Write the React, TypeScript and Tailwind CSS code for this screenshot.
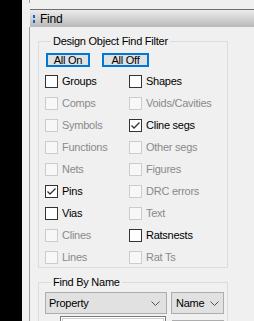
import React from "react";

type Item = { label: string; enabled: boolean; checked?: boolean };

const col1: Item[] = [
  { label: "Groups", enabled: true },
  { label: "Comps", enabled: false },
  { label: "Symbols", enabled: false },
  { label: "Functions", enabled: false },
  { label: "Nets", enabled: false },
  { label: "Pins", enabled: true, checked: true },
  { label: "Vias", enabled: true },
  { label: "Clines", enabled: false },
  { label: "Lines", enabled: false },
];
const col2: Item[] = [
  { label: "Shapes", enabled: true },
  { label: "Voids/Cavities", enabled: false },
  { label: "Cline segs", enabled: true, checked: true },
  { label: "Other segs", enabled: false },
  { label: "Figures", enabled: false },
  { label: "DRC errors", enabled: false },
  { label: "Text", enabled: false },
  { label: "Ratsnests", enabled: true },
  { label: "Rat Ts", enabled: false },
];

function Check({ item }: { item: Item }) {
  return (
    <div className="flex h-[13px] items-center">
      <div
        className={
          item.enabled
            ? "w-[13px] h-[13px] shrink-0 border border-[#333333] bg-white"
            : "w-[13px] h-[13px] shrink-0 border border-[#cccccc] bg-[#f7f7f7]"
        }
      >
        {item.checked && (
          <svg width="11" height="11" viewBox="0 0 11 11" className="block">
            <path d="M1.5 5.5 L4 8 L9.5 2.5" fill="none" stroke="#333333" strokeWidth="1.3" />
          </svg>
        )}
      </div>
      <span
        className={
          "ml-[4px] leading-[13px] whitespace-nowrap " +
          (item.enabled ? "text-black" : "text-[#8a8a8a]")
        }
      >
        {item.label}
      </span>
    </div>
  );
}

function Chevron() {
  return (
    <svg width="9" height="5" viewBox="0 0 9 5" className="block">
      <path d="M0.5 0.5 L4.5 4.5 L8.5 0.5" fill="none" stroke="#555555" strokeWidth="1" />
    </svg>
  );
}

export default function App() {
  return (
    <div
      className="w-[254px] h-[321px] bg-[#f0f0f0] flex overflow-hidden text-[11px] tracking-[-0.25px] text-black"
      style={{ fontFamily: '"Liberation Sans", Arial, sans-serif' }}
    >
      <div className="w-[22px] h-full bg-black shrink-0" />
      <div className="w-[7px] shrink-0" />
      <div className="flex-1 flex flex-col min-w-0">
        <div className="h-[9px] shrink-0">
          <div className="w-[1px] h-[3px] bg-[#a0a0a0]" />
        </div>
        <div className="flex h-[18px] shrink-0">
          <div className="w-[1px]" />
          <div className="flex-1 border-t border-[#6e6e6e] bg-gradient-to-b from-[#ececec] to-[#b9b9b9] flex items-center">
            <div className="ml-[3px] flex flex-col gap-[2px]">
              <div className="w-[2px] h-[3px] bg-[#0a64d0]" />
              <div className="w-[2px] h-[3px] bg-[#0a64d0]" />
            </div>
            <span className="ml-[5px] text-[12px] leading-[14px]">Find</span>
          </div>
        </div>
        <div className="flex-1 border-l border-[#a0a0a0] pl-[8px] pt-[7px]">
          <fieldset className="w-[190px] border border-[#dcdcdc] pl-[6px] pb-[3px]">
            <legend className="ml-[6px] px-[2px] leading-[14px]">Design Object Find Filter</legend>
            <div className="flex pt-[5px] ml-[1px]">
              <div className="w-[44px] h-[14px] border-2 border-[#0078d7] bg-[#e1e1e1] flex items-center justify-center leading-[10px]">
                All On
              </div>
              <div className="ml-[12px] w-[47px] h-[14px] border-2 border-[#0078d7] bg-[#e1e1e1] flex items-center justify-center leading-[10px]">
                All Off
              </div>
            </div>
            <div className="flex mt-[8px]">
              <div className="w-[84px] flex flex-col gap-[9px]">
                {col1.map((it) => (
                  <Check key={it.label} item={it} />
                ))}
              </div>
              <div className="flex flex-col gap-[9px]">
                {col2.map((it) => (
                  <Check key={it.label} item={it} />
                ))}
              </div>
            </div>
          </fieldset>
          <fieldset className="mt-[7px] w-[190px] border border-[#dcdcdc] pl-[6px]">
            <legend className="ml-[6px] px-[2px] leading-[14px]">Find By Name</legend>
            <div className="flex pt-[3px]">
              <div className="w-[122px] h-[22px] border border-[#adadad] bg-[#e1e1e1] flex items-center justify-between pl-[3px] pr-[6px]">
                <span>Property</span>
                <Chevron />
              </div>
              <div className="ml-[4px] w-[53px] h-[22px] border border-[#adadad] bg-[#e1e1e1] flex items-center justify-between pl-[4px] pr-[4px]">
                <span>Name</span>
                <Chevron />
              </div>
            </div>
            <div className="flex mt-[2px]">
              <div className="ml-[15px] w-[106px] h-[22px] border border-[#7a7a7a] bg-white p-[1px]">
                <div className="w-full h-full border border-[#d0d0d0]" />
              </div>
              <div className="ml-[6px] w-[52px] h-[22px] mt-[4px] border border-[#adadad] bg-[#e1e1e1]" />
            </div>
          </fieldset>
        </div>
      </div>
    </div>
  );
}
